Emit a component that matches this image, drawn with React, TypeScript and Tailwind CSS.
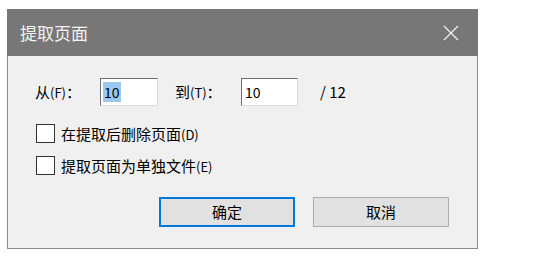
import React, { useState } from 'react';

const font = { fontFamily: '"Noto Sans CJK SC", "Noto Sans", sans-serif' };

const Field: React.FC<{ value: string; selected?: boolean; width: string }> = ({ value, selected, width }) => (
  <div
    className={`${width} h-[28px] bg-white border border-t-[#6e6e6e] border-l-[#6e6e6e] border-r-[#dcdcdc] border-b-[#dcdcdc] flex items-center pl-[2px] text-[14px] text-black`}
  >
    <span className={selected ? 'bg-[#99c9ef] px-[1px] leading-[20px]' : 'px-[1px] leading-[20px]'}>{value}</span>
  </div>
);

const Check: React.FC<{ label: string; hotkey: string; checked: boolean; onToggle: () => void }> = ({ label, hotkey, checked, onToggle }) => (
  <label className="flex items-center gap-[6px] cursor-default" onClick={onToggle}>
    <span className="w-[19px] h-[19px] bg-white border border-[#333333] flex items-center justify-center text-[12px]">
      {checked ? '✓' : ''}
    </span>
    <span className="text-[15px] text-black leading-none">
      {label}
      <span className="text-[13px]">{hotkey}</span>
    </span>
  </label>
);

export default function App() {
  const [removeAfter, setRemoveAfter] = useState(false);
  const [separate, setSeparate] = useState(false);

  return (
    <div className="w-[556px] h-[265px] bg-white pt-[9px] pl-[7px]" style={font}>
      <div className="w-[471px] flex flex-col">
        {/* Title bar */}
        <div className="h-[47px] bg-[#777777] flex items-center justify-between pl-[13px] pr-[19px]">
          <span className="text-[17px] text-[#f2f2f2]">提取页面</span>
          <svg width="16" height="16" viewBox="0 0 16 16" className="text-[#f2f2f2]">
            <path d="M1 1 L15 15 M15 1 L1 15" stroke="currentColor" strokeWidth="1.2" fill="none" />
          </svg>
        </div>

        {/* Body */}
        <div className="h-[193px] bg-[#f0f0f0] border border-t-0 border-[#8a8a8a] pl-[27px] pt-[22px]">
          <div className="flex items-center text-[15px] text-black">
            <span className="w-[65px]">从<span className="text-[13px]">(F)</span>：</span>
            <Field value="10" selected width="w-[58px]" />
            <span className="ml-[17px] w-[66px]">到<span className="text-[13px]">(T)</span>：</span>
            <Field value="10" width="w-[57px]" />
            <span className="ml-[22px]">/ 12</span>
          </div>

          <div className="mt-[18px] ml-[1px] flex flex-col gap-[13px]">
            <Check label="在提取后删除页面" hotkey="(D)" checked={removeAfter} onToggle={() => setRemoveAfter((v) => !v)} />
            <Check label="提取页面为单独文件" hotkey="(E)" checked={separate} onToggle={() => setSeparate((v) => !v)} />
          </div>

          <div className="mt-[22px] ml-[124px] flex gap-[18px]">
            <button className="w-[136px] h-[30px] bg-[#e1e1e1] border-2 border-[#0078d7] text-[15px] text-black">
              确定
            </button>
            <button className="w-[136px] h-[30px] bg-[#e1e1e1] border border-[#adadad] text-[15px] text-black">
              取消
            </button>
          </div>
        </div>
      </div>
    </div>
  );
}
